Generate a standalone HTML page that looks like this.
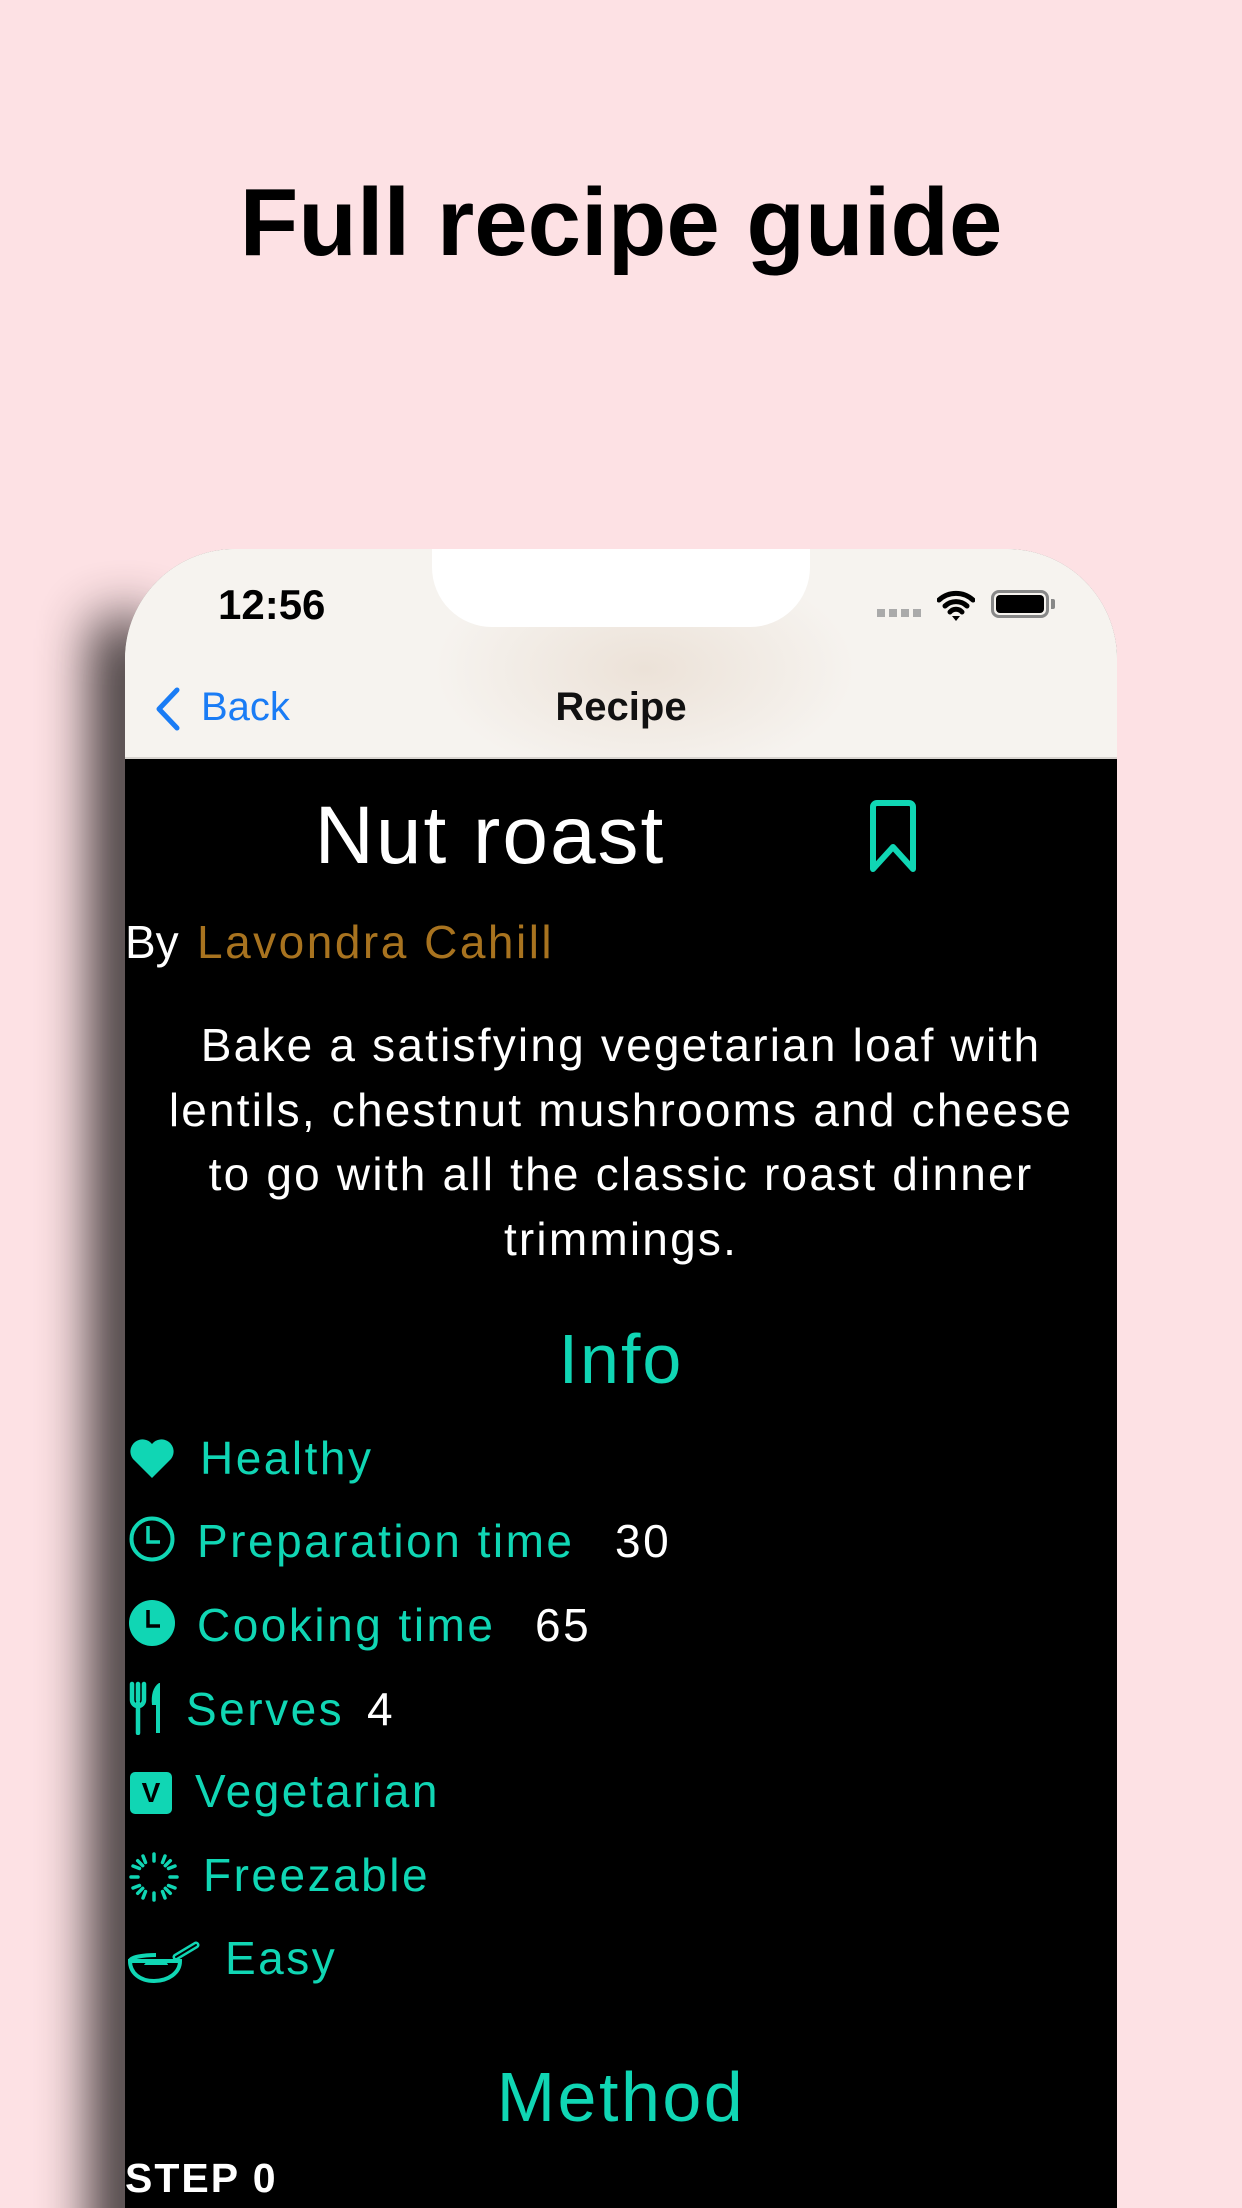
<!DOCTYPE html>
<html><head><meta charset="utf-8"><style>
*{margin:0;padding:0;box-sizing:border-box}
html,body{width:1242px;height:2208px;overflow:hidden}
body{background:#fde1e4;font-family:"Liberation Sans",sans-serif}
#root{position:relative;width:1242px;height:2208px;overflow:hidden}
.a{position:absolute;white-space:nowrap}
.t{color:#10d6b4}
.w{color:#fff}
.r{font-size:46px;letter-spacing:2.5px}
</style></head><body><div id="root">
<div class="a" style="left:0;width:1242px;top:168px;text-align:center;font-size:96px;font-weight:bold;color:#000">Full recipe guide</div>
<!-- shadow -->
<div class="a" style="left:0;top:560px;width:200px;height:1648px;overflow:hidden"><div class="a" style="left:95px;top:60px;width:60px;height:1700px;background:#000;filter:blur(28px);opacity:.85"></div></div>
<!-- phone -->
<div class="a" style="left:125px;top:549px;width:992px;height:1659px;background:#000;border-radius:110px 110px 0 0;overflow:hidden">
 <div class="a" style="left:0;top:0;width:992px;height:210px;background:radial-gradient(ellipse 300px 160px at 520px 120px,#ece2d8,#f6f3ef 70%),#f3f0ec"></div>
 <div class="a" style="left:0;top:208px;width:992px;height:2px;background:#d8d4d0"></div>
 <div class="a" style="left:307px;top:-2px;width:378px;height:80px;background:#fff;border-radius:0 0 60px 60px"></div>
 <div class="a" style="left:93px;top:32px;font-size:42px;font-weight:bold;color:#000">12:56</div>
 <div class="a" style="left:752px;top:60px;width:46px;height:8px;background:repeating-linear-gradient(to right,#aaa 0 8px,transparent 8px 12px)"></div>
 <svg class="a" style="left:812px;top:40px" width="38" height="32" viewBox="0 0 38 32"><path d="M2 11a25 25 0 0 1 34 0M8 17a16 16 0 0 1 22 0M13 23a8 8 0 0 1 12 0" stroke="#000" stroke-width="5" fill="none" stroke-linecap="round"/><path d="M15 27l4 5 4-5z" fill="#000"/></svg>
 <div class="a" style="left:866px;top:41px;width:58px;height:28px;border:3px solid #888;border-radius:8px;padding:2px"><div style="width:100%;height:100%;background:#000;border-radius:4px"></div></div>
 <div class="a" style="left:926px;top:50px;width:4px;height:10px;background:#888;border-radius:0 2px 2px 0"></div>
 <svg class="a" style="left:28px;top:137px" width="30" height="46" viewBox="0 0 30 46"><path d="M24 4L6 23l18 19" stroke="#1a7cf5" stroke-width="5" fill="none" stroke-linecap="round" stroke-linejoin="round"/></svg>
 <div class="a" style="left:76px;top:136px;font-size:40px;color:#1a7cf5">Back</div>
 <div class="a" style="left:0;width:992px;top:136px;text-align:center;font-size:40px;font-weight:bold;color:#111">Recipe</div>

 <div class="a w" style="left:0;width:730px;top:240px;text-align:center;font-size:82px;letter-spacing:2px">Nut roast</div>
 <svg class="a" style="left:742px;top:250px" width="52" height="76" viewBox="0 0 52 76"><path d="M6 70V8a4 4 0 0 1 4-4h32a4 4 0 0 1 4 4v62L26 48z" stroke="#10d6b4" stroke-width="6" fill="none" stroke-linejoin="round"/></svg>
 <div class="a w" style="left:0;top:366px;font-size:46px">By</div>
 <div class="a" style="left:72px;top:366px;font-size:46px;color:#a8731f;letter-spacing:2.5px">Lavondra Cahill</div>
 <div class="a w" style="left:0;width:992px;top:464px;text-align:center;font-size:46px;line-height:64.5px;letter-spacing:2.2px">Bake a satisfying vegetarian loaf with<br>lentils, chestnut mushrooms and cheese<br>to go with all the classic roast dinner<br>trimmings.</div>
 <div class="a t" style="left:0;width:992px;top:770px;text-align:center;font-size:70px;letter-spacing:2px">Info</div>

 <svg class="a" style="left:4px;top:888px" width="46" height="42" viewBox="0 0 46 42"><path d="M23 41L4 22A11 11 0 0 1 23 7a11 11 0 0 1 19 15z" fill="#10d6b4"/></svg>
 <div class="a t r" style="left:75px;top:882px">Healthy</div>

 <svg class="a" style="left:3px;top:966px" width="48" height="48" viewBox="0 0 48 48"><circle cx="24" cy="24" r="20.5" stroke="#10d6b4" stroke-width="4" fill="none"/><path d="M20 11v16h12" stroke="#10d6b4" stroke-width="3.5" fill="none"/></svg>
 <div class="a t r" style="left:72px;top:965px">Preparation time</div>
 <div class="a w r" style="left:490px;top:965px">30</div>

 <svg class="a" style="left:3px;top:1050px" width="48" height="48" viewBox="0 0 48 48"><circle cx="24" cy="24" r="23" fill="#10d6b4"/><path d="M20 11v16h12" stroke="#000" stroke-width="3.5" fill="none"/></svg>
 <div class="a t r" style="left:72px;top:1049px">Cooking time</div>
 <div class="a w r" style="left:410px;top:1049px">65</div>

 <svg class="a" style="left:4px;top:1132px" width="36" height="54" viewBox="0 0 36 54"><path d="M3 3v16a6 6 0 0 0 12 0V3M9 3v16M9 22v30" stroke="#10d6b4" stroke-width="4.5" fill="none" stroke-linecap="round"/><path d="M30 2c-6 4-8 12-7 22h4v28h4V2z" fill="#10d6b4"/></svg>
 <div class="a t r" style="left:61px;top:1133px">Serves</div>
 <div class="a w r" style="left:242px;top:1133px">4</div>

 <div class="a" style="left:5px;top:1223px;width:42px;height:42px;background:#10d6b4;border-radius:5px;color:#000;font-size:28px;font-weight:bold;text-align:center;line-height:42px">V</div>
 <div class="a t r" style="left:70px;top:1215px">Vegetarian</div>

 <svg class="a" style="left:3px;top:1302px" width="52" height="52" viewBox="0 0 52 52"><g stroke="#10d6b4" stroke-width="3.5" stroke-linecap="round"><path d="M26 3v7M26 42v7M3 26h7M42 26h7M9.7 9.7l5 5M37.3 37.3l5 5M9.7 42.3l5-5M37.3 14.7l5-5M15 5l2.5 6.5M34.5 40.5L37 47M5 15l6.5 2.5M40.5 34.5L47 37M5 37l6.5-2.5M40.5 17.5L47 15M15 47l2.5-6.5M34.5 11.5L37 5"/></g></svg>
 <div class="a t r" style="left:78px;top:1299px">Freezable</div>

 <svg class="a" style="left:3px;top:1390px" width="72" height="46" viewBox="0 0 72 46"><path d="M2 22h50c0 12-12 20-26 20S2 34 2 22z" stroke="#10d6b4" stroke-width="4" fill="none"/><path d="M2 22c0-4 14-6 26-6" stroke="#10d6b4" stroke-width="4" fill="none"/><path d="M16 26c4-6 12-6 16-4 4 0 8 2 8 4z" fill="#10d6b4"/><path d="M48 18L68 6" stroke="#10d6b4" stroke-width="7" stroke-linecap="round"/><path d="M48 18L68 6" stroke="#000" stroke-width="2" stroke-linecap="round"/></svg>
 <div class="a t r" style="left:100px;top:1382px">Easy</div>

 <div class="a t" style="left:0;width:992px;top:1508px;text-align:center;font-size:70px;letter-spacing:2.5px">Method</div>
 <div class="a w" style="left:0;top:1606px;font-size:41px;font-weight:bold;letter-spacing:2px">STEP  0</div>
</div>
</div></body></html>
